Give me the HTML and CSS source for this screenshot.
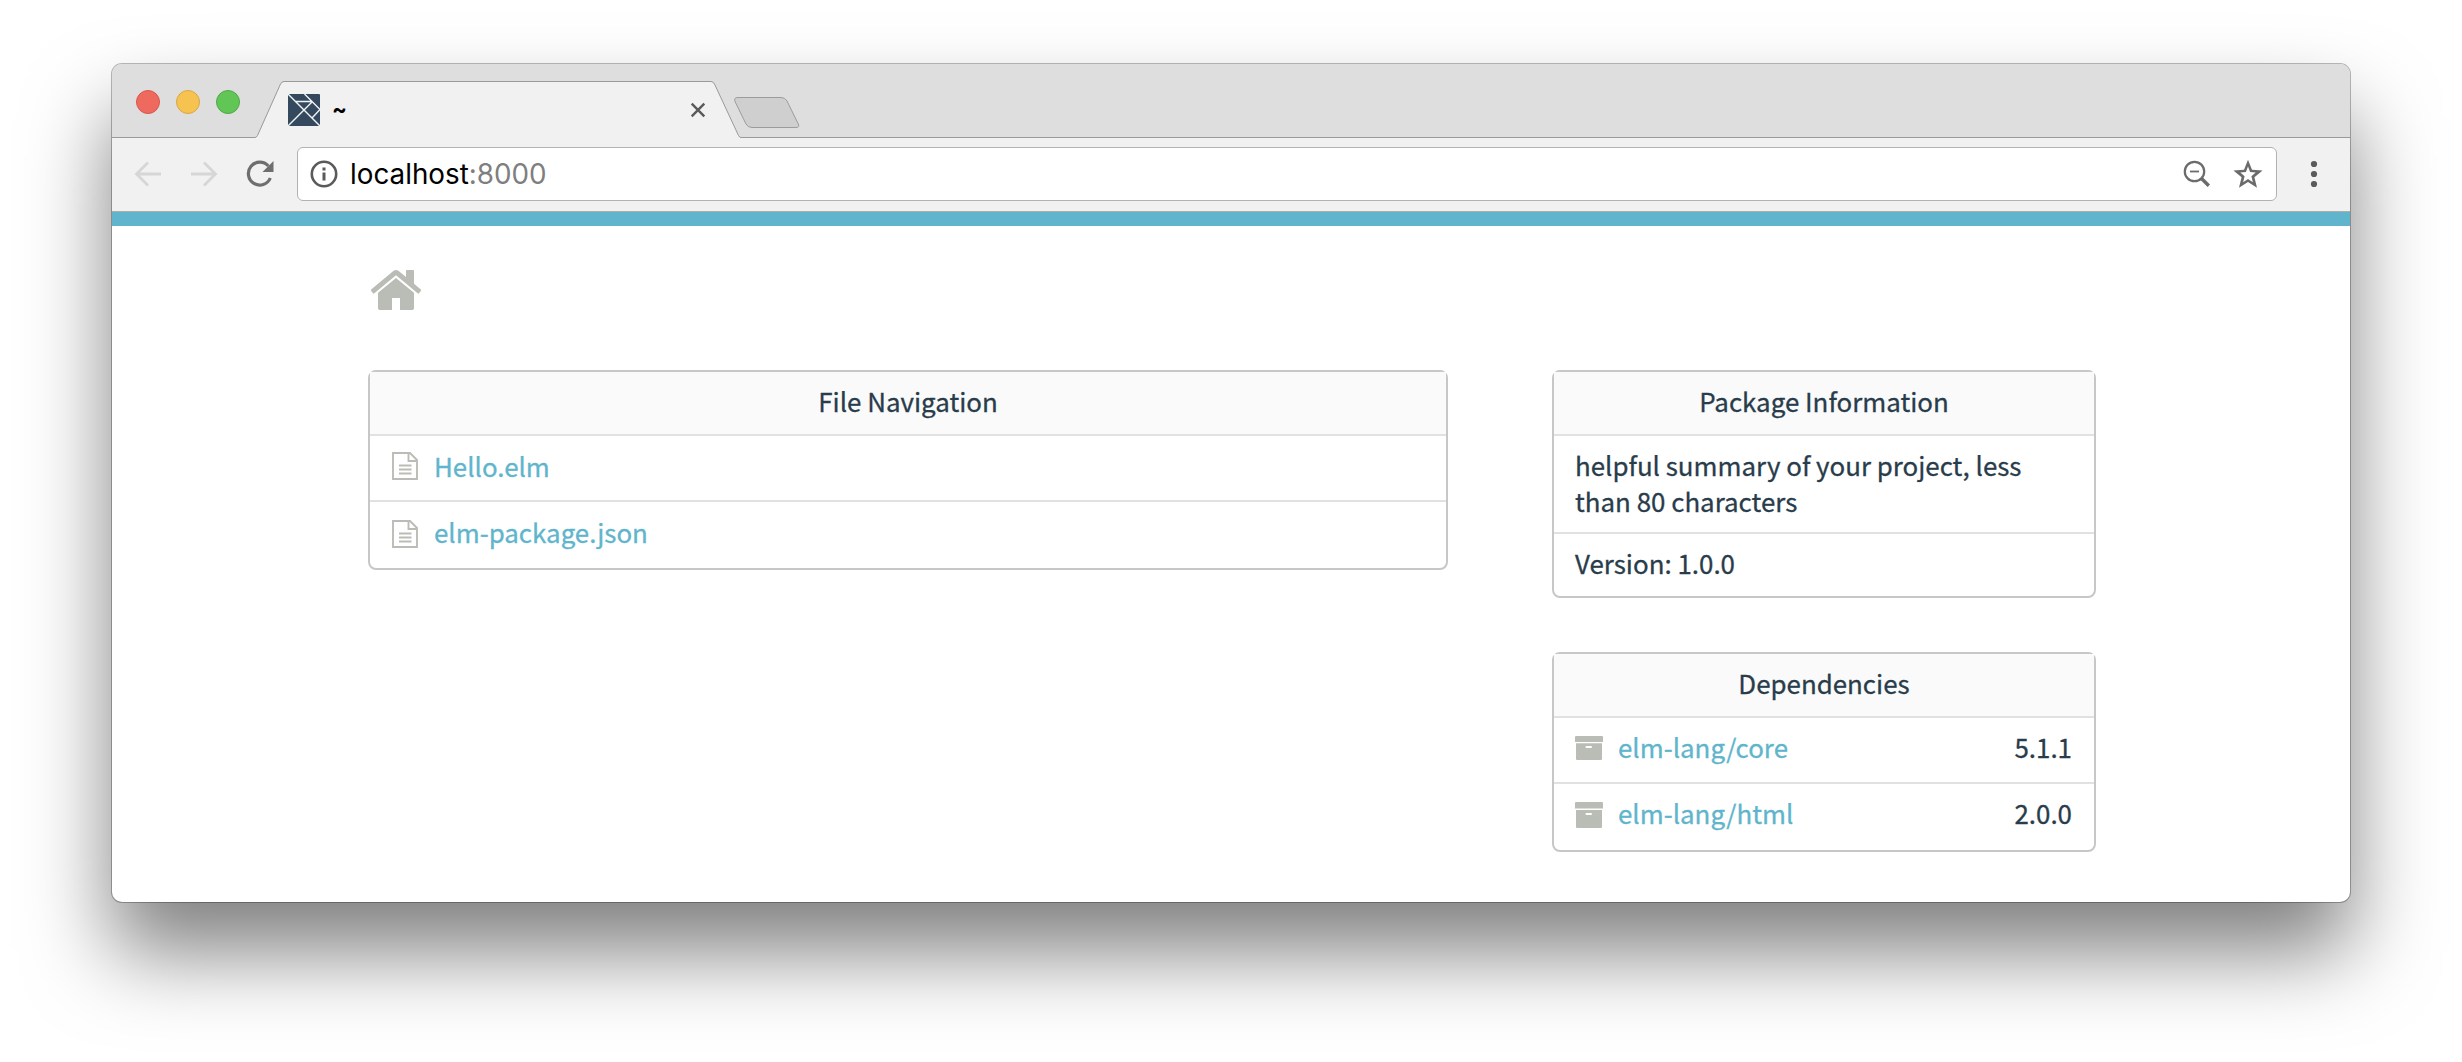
FILE: index.html
```html
<!DOCTYPE html>
<html lang="en">
<head>
<meta charset="utf-8">
<title>~</title>
<link rel="stylesheet" href="styles.css">
</head>
<body>
<div class="window">
  <div class="tabstrip">
    <svg class="strip-shape" width="2238" height="74" viewBox="0 0 2238 74">
      <path d="M-2 73.500H143Q144.500 73.500 145.500 71.500L168.500 20Q169.700 17.500 172 17.500H599Q601.300 17.500 602.500 20L626.500 71.500Q627.500 73.500 629 73.500H2240V76H-2Z" fill="#f1f1f1" stroke="#999" />
      <path d="M626 33.500H669Q673 33.500 675 37L686.300 60Q688 63.500 684 63.500H640Q636 63.500 634 60L623 37.500Q621.500 33.500 626 33.500Z" fill="#cfcfcf" stroke="#9c9c9c"/>
    </svg>
    <div class="lights">
      <span class="light red"></span><span class="light yellow"></span><span class="light green"></span>
    </div>
    <div class="tab">
      <svg width="32" height="32" viewBox="0 0 32 32"><rect width="32" height="32" rx="1" fill="#34495e"/><path d="M0 0L32 32M0 32L24.500 7.500M7.500 7.500H24.500M16.500 0L32 15.500L24 24" fill="none" stroke="#f0f4f6" stroke-width="1.400"/></svg>
      <span class="tab-title">~</span>
      <svg class="tab-close" width="16" height="16" viewBox="0 0 16 16"><path d="M1.700 1.700L14.300 14.300M14.300 1.700L1.700 14.300" stroke="#5a5a5a" stroke-width="2.400"/></svg>
    </div>
  </div>
  <div class="toolbar">
    <svg class="back" width="28" height="28" viewBox="0 0 28 28"><path d="M27 14H3M14 2.500L2.500 14L14 25.500" fill="none" stroke="#d6d6d6" stroke-width="2.800"/></svg>
    <svg class="forward" width="28" height="28" viewBox="0 0 28 28"><path d="M1 14H25M14 2.500L25.500 14L14 25.500" fill="none" stroke="#d6d6d6" stroke-width="2.800"/></svg>
    <svg class="reload" width="28" height="28" viewBox="0 0 28 28"><path d="M22.300 6A11.400 11.400 0 1 0 24.300 18" fill="none" stroke="#6e6e6e" stroke-width="3.200"/><path d="M27.500 1V12H16.500Z" fill="#6e6e6e"/></svg>
    <div class="address">
      <svg width="28" height="28" viewBox="0 0 28 28"><circle cx="14" cy="14" r="12.200" fill="none" stroke="#5a5a5a" stroke-width="2.600"/><path d="M12.500 7.500h3v3h-3zM12.500 12.500h3v8h-3z" fill="#5a5a5a"/></svg>
      <span class="url">localhost<span class="port">:8000</span></span>
      <svg class="zoom" width="28" height="28" viewBox="0 0 28 28"><circle cx="11.500" cy="11.500" r="9.700" fill="none" stroke="#6b6b6b" stroke-width="2.200"/><path d="M7 11.500h9" stroke="#6b6b6b" stroke-width="1.800"/><path d="M18.500 18.500L25.800 25.800" stroke="#6b6b6b" stroke-width="3.400"/></svg>
      <svg class="star" width="30" height="30" viewBox="0 0 30 30"><path fill="#6b6b6b" fill-rule="evenodd" d="M15 .8L19 10.800L29.600 11.600L21.400 18.300L24 28.800L15 23L6 28.800L8.600 18.300L.4 11.600L11 10.800ZM15 7.400L12.900 13L7.300 13.500L11.600 17.200L10.100 23.200L15 19.900L19.900 23.200L18.400 17.200L22.700 13.500L17.100 13Z"/></svg>
    </div>
    <svg class="menu" width="8" height="28" viewBox="0 0 8 28"><g fill="#5a5a5a"><circle cx="4" cy="4" r="3.100"/><circle cx="4" cy="14" r="3.100"/><circle cx="4" cy="24" r="3.100"/></g></svg>
  </div>
  <main class="page">
    <svg class="home" width="56" height="56" viewBox="0 0 1792 1792"><path fill="#babdb6" d="M1472 992v480q0 26-19 45t-45 19h-384v-384h-256v384h-384q-26 0-45-19t-19-45v-480q0-1 .5-3t.5-3l575-474 575 474q1 2 1 6zm223-69l-62 74q-8 9-21 11h-3q-13 0-21-7l-692-577-692 577q-12 8-24 7-13-2-21-11l-62-74q-8-10-7-23.500t11-21.500l719-599q32-26 76-26t76 26l244 204v-195q0-14 9-23t23-9h192q14 0 23 9t9 23v408l219 182q10 8 11 21.500t-7 23.500z"/></svg>
    <div class="columns">
      <section class="box files">
        <h2>File Navigation</h2>
        <div class="row">
          <svg width="26" height="28" viewBox="0 0 26 28"><path d="M1 1H18L25 8V27H1ZM16.500 1V9H25M7 13.500H19.500M7 17.500H19.500M7 21.500H19.500" fill="none" stroke="#babdb6" stroke-width="1.900"/></svg>
          <a>Hello.elm</a>
        </div>
        <div class="row last">
          <svg width="26" height="28" viewBox="0 0 26 28"><path d="M1 1H18L25 8V27H1ZM16.500 1V9H25M7 13.500H19.500M7 17.500H19.500M7 21.500H19.500" fill="none" stroke="#babdb6" stroke-width="1.900"/></svg>
          <a>elm-package.json</a>
        </div>
      </section>
      <div class="side">
        <section class="box">
          <h2>Package Information</h2>
          <p class="summary">helpful summary of your project, less than 80 characters</p>
          <p class="version">Version: 1.0.0</p>
        </section>
        <section class="box">
          <h2>Dependencies</h2>
          <div class="row dep">
            <svg width="28" height="26" viewBox="0 0 28 26"><path fill="#babdb6" fill-rule="evenodd" d="M1 0H27Q28 0 28 1V6H0V1Q0 0 1 0ZM1 7.300H27V23Q27 24 26 24H2Q1 24 1 23ZM11.500 10Q10.500 10 10.500 11T11.500 12H16Q17 12 17 11T16 10Z"/></svg>
            <a>elm-lang/core</a><span class="num">5.1.1</span>
          </div>
          <div class="row dep last">
            <svg width="28" height="26" viewBox="0 0 28 26"><path fill="#babdb6" fill-rule="evenodd" d="M1 0H27Q28 0 28 1V6.500H0V1Q0 0 1 0ZM1 8H27V25Q27 26 26 26H2Q1 26 1 25ZM11.500 11Q10.500 11 10.500 12T11.500 13H16Q17 13 17 12T16 11Z"/></svg>
            <a>elm-lang/html</a><span class="num">2.0.0</span>
          </div>
        </section>
      </div>
    </div>
  </main>
</div>
</body>
</html>
```
FILE: styles.css
```css
* { box-sizing: border-box; }
html { background: #fff; }
body {
  margin: 0;
  height: 1062px;
  padding: 64px 112px 0;
  overflow: hidden;
  color: #293c4b;
  font-family: "Noto Sans CJK SC", "Noto Sans", sans-serif;
  font-size: 25.9px;
}
svg { display: block; flex: none; }
.window {
  width: 2238px;
  height: 838px;
  border-radius: 10px;
  background: #fff;
  box-shadow: 0 0 0 1px rgba(0, 0, 0, .27), 0 50px 84px rgba(0, 0, 0, .5);
}
.tabstrip {
  position: relative;
  display: flex;
  height: 74px;
  background: #dedede;
  border-radius: 10px 10px 0 0;
}
.strip-shape { position: absolute; left: 0; top: 0; }
.lights { display: flex; gap: 16px; padding: 26px 0 0 24px; width: 176px; }
.light { width: 24px; height: 24px; border-radius: 50%; border: 1px solid; }
.red { background: #ee6a5e; border-color: #d9564c; }
.yellow { background: #f6c351; border-color: #dba644; }
.green { background: #61c655; border-color: #50a946; }
.tab { position: relative; display: flex; width: 418px; height: 62px; margin-top: 15px; align-items: center; }
.tab-title { margin: 0 0 2px 12px; font: bold 22px Inter, sans-serif; color: #000; }
.tab-close { margin-left: auto; }
.toolbar {
  display: flex;
  align-items: center;
  height: 74px;
  background: #f1f1f1;
  border-bottom: 1px solid #adadad;
  padding: 0 0 1px 22px;
}
.forward { margin-left: 28px; }
.reload { margin-left: 28px; }
.address {
  display: flex;
  align-items: center;
  width: 1980px;
  height: 54px;
  margin-left: 23px;
  padding: 0 13px 0 12px;
  background: #fff;
  border: 1px solid #b2b2b2;
  border-radius: 6px;
}
.url { margin-left: 12px; font: 27.800px Inter, sans-serif; color: #000; }
.port { color: #7f7f7f; }
.zoom { margin-left: auto; }
.star { margin-left: 22px; }
.menu { margin-left: 33px; }
.page { border-top: 14px solid #60b5cc; padding: 36px 254px 0 256px; }
.columns { display: flex; justify-content: space-between; margin-top: 52px; }
.side { width: 544px; display: flex; flex-direction: column; gap: 54px; }
.box { border: 2px solid #c7c7c7; border-radius: 8px; -webkit-text-stroke: .3px; }
.files { width: 1080px; height: 200px; }
h2 {
  margin: 0;
  height: 64px;
  font-size: 25.9px;
  font-weight: 400;
  line-height: 58px;
  text-align: center;
  background: #fafafa;
  border-bottom: 2px solid #e1e1e1;
}
.row { display: flex; height: 66px; padding: 0 22px; border-bottom: 2px solid #e1e1e1; line-height: 59px; }
.row svg { margin-top: 16px; }
.row.last { border-bottom: 0; }
.row a { color: #60b5cc; margin-left: 16px; }
.row.dep { padding: 0 22px 0 21px; line-height: 58px; }
.dep a { margin-left: 15px; }
.row.last svg, .dep svg { margin-top: 18px; }
.num { margin-left: auto; }
p { margin: 0; padding: 11px 21px; line-height: 36px; }
.summary { height: 98px; border-bottom: 2px solid #e1e1e1; }
.version { height: 62px; }
```
